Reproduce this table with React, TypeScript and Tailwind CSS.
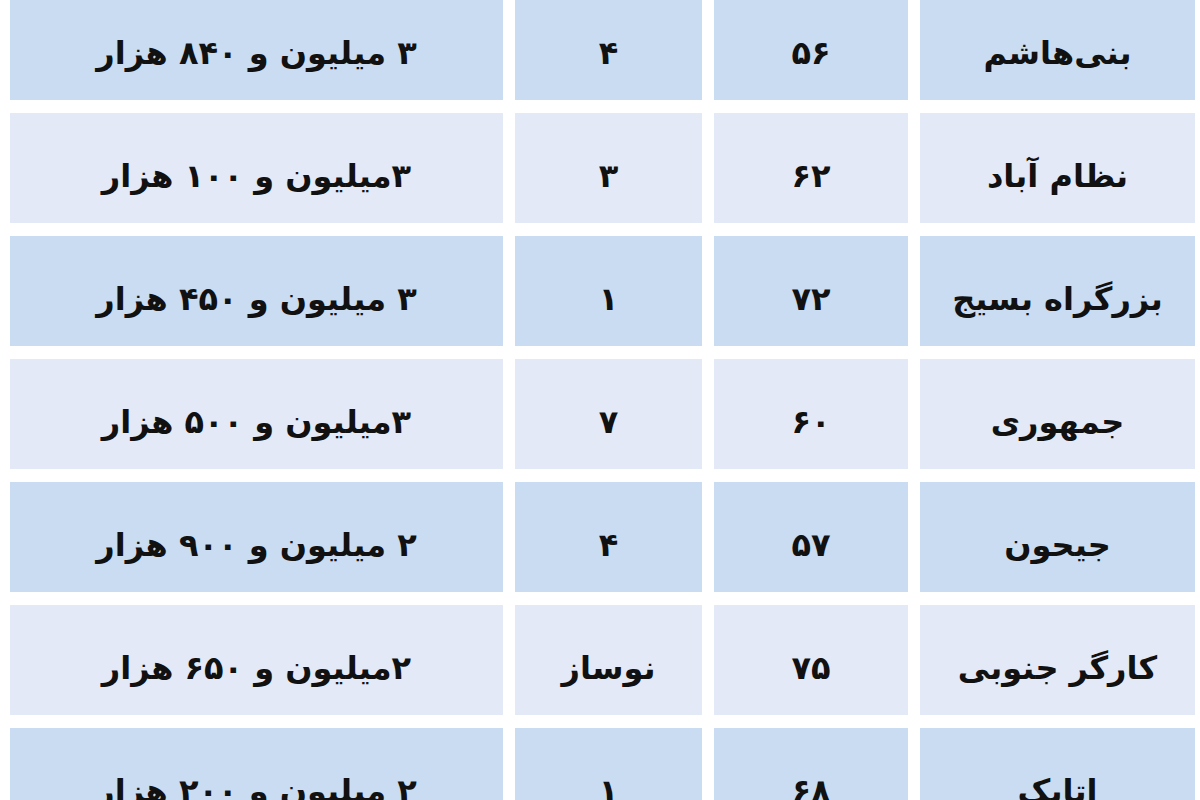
import React from "react"

type Row = {
  area: string
  size: string
  age: string
  price: string
}

const rows: Row[] = [
  { area: "بنی\u200cهاشم", size: "۵۶", age: "۴", price: "۳ میلیون و ۸۴۰ هزار" },
  { area: "نظام آباد", size: "۶۲", age: "۳", price: "۳میلیون و ۱۰۰ هزار" },
  { area: "بزرگراه بسیج", size: "۷۲", age: "۱", price: "۳ میلیون و ۴۵۰ هزار" },
  { area: "جمهوری", size: "۶۰", age: "۷", price: "۳میلیون و ۵۰۰ هزار" },
  { area: "جیحون", size: "۵۷", age: "۴", price: "۲ میلیون و ۹۰۰ هزار" },
  { area: "کارگر جنوبی", size: "۷۵", age: "نوساز", price: "۲میلیون و ۶۵۰ هزار" },
  { area: "اتابک", size: "۶۸", age: "۱", price: "۲ میلیون و ۲۰۰ هزار" },
]

const Cell = ({ children, blue }: { children: React.ReactNode; blue: boolean }) => (
  <div
    className={
      "flex h-[110px] items-center justify-center pt-[16px] text-[32px] font-bold text-[#111] " +
      (blue ? "bg-[#c9dcf2]" : "bg-[#e3e9f7]")
    }
  >
    <span dir="rtl">{children}</span>
  </div>
)

const App = () => {
  return (
    <div
      className="h-[800px] w-[1200px] overflow-hidden bg-white"
      style={{ fontFamily: '"DejaVu Sans", sans-serif' }}
    >
      <div className="-mt-[10px] flex flex-col gap-[13px] pl-[10px] pr-[5px]">
        {rows.map((r, i) => {
          const blue = i % 2 === 0
          return (
            <div key={i} className="grid grid-cols-[493px_187px_194px_1fr] gap-x-[12px]">
              <Cell blue={blue}>{r.price}</Cell>
              <Cell blue={blue}>{r.age}</Cell>
              <Cell blue={blue}>{r.size}</Cell>
              <Cell blue={blue}>{r.area}</Cell>
            </div>
          )
        })}
      </div>
    </div>
  )
}

export default App
